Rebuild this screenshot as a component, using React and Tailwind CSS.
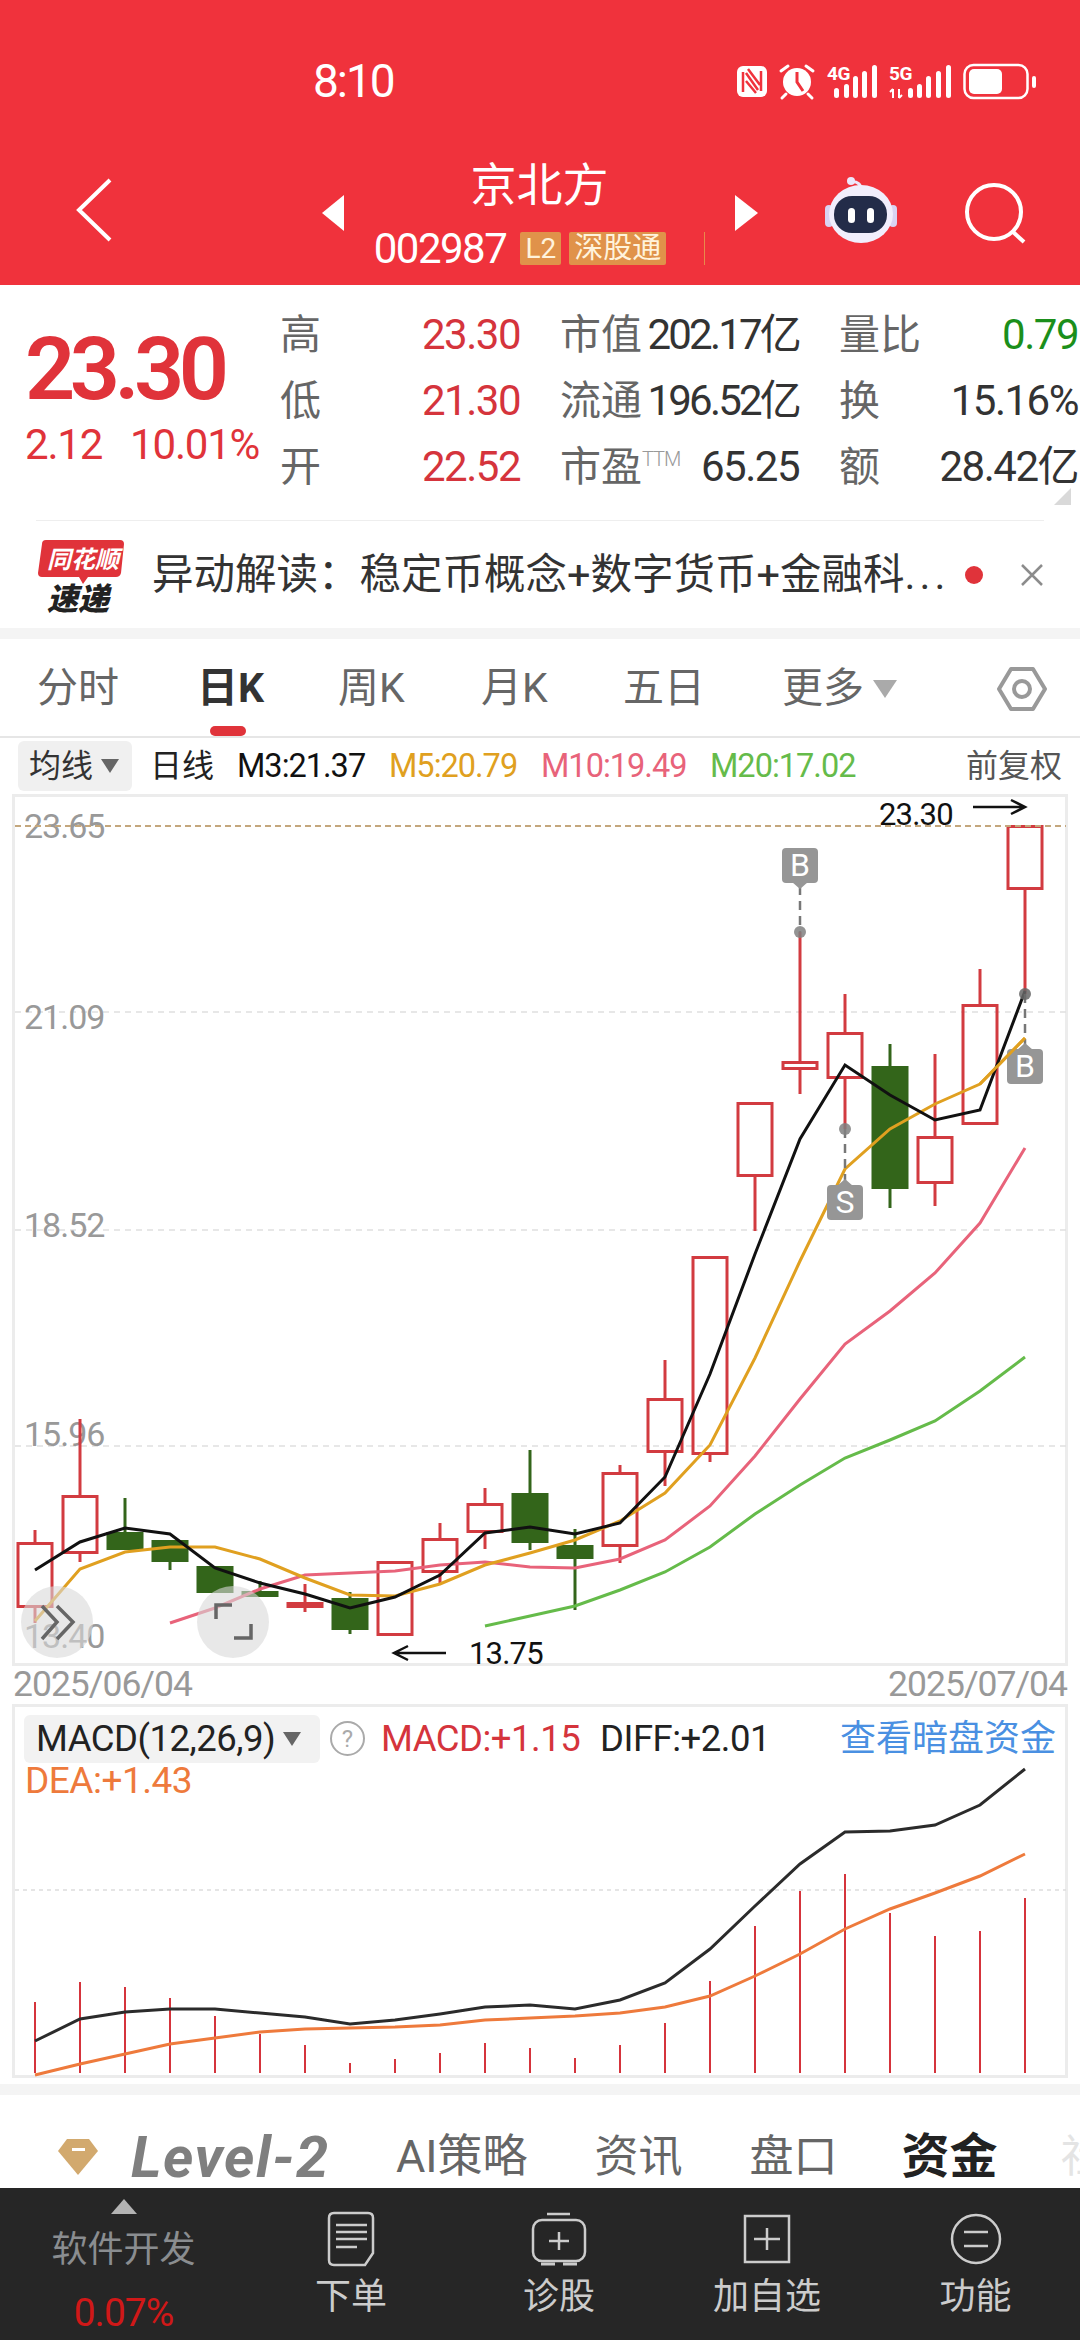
import React from 'react';

const xAt = (i) => 35 + 45 * i;
const toPoints = (ys, start = 0) => ys.map((y, i) => `${xAt(i + start)},${y}`).join(' ');

// open-close body top/bottom plus wick top/bottom, in page pixels
const candles = [
    { up: true, top: 1541, bottom: 1607, high: 1529, low: 1622 },
    { up: true, top: 1494, bottom: 1553, high: 1418, low: 1561 },
    { up: false, top: 1531, bottom: 1549, high: 1497, low: 1549 },
    { up: false, top: 1539, bottom: 1561, high: 1539, low: 1569 },
    { up: false, top: 1565, bottom: 1592, high: 1565, low: 1592 },
    { up: false, top: 1590, bottom: 1596, high: 1580, low: 1596 },
    { up: true, top: 1601, bottom: 1607, high: 1583, low: 1611 },
    { up: false, top: 1597, bottom: 1629, high: 1591, low: 1633 },
    { up: true, top: 1560, bottom: 1635, high: 1560, low: 1635 },
    { up: true, top: 1537, bottom: 1572, high: 1522, low: 1582 },
    { up: true, top: 1502, bottom: 1532, high: 1487, low: 1548 },
    { up: false, top: 1492, bottom: 1542, high: 1449, low: 1549 },
    { up: false, top: 1544, bottom: 1558, high: 1528, low: 1609 },
    { up: true, top: 1471, bottom: 1546, high: 1464, low: 1562 },
    { up: true, top: 1397, bottom: 1452, high: 1359, low: 1485 },
    { up: true, top: 1255, bottom: 1454, high: 1255, low: 1461 },
    { up: true, top: 1101, bottom: 1176, high: 1101, low: 1230 },
    { up: true, top: 1060, bottom: 1069, high: 931, low: 1093 },
    { up: true, top: 1031, bottom: 1078, high: 993, low: 1128 },
    { up: false, top: 1065, bottom: 1188, high: 1043, low: 1207 },
    { up: true, top: 1135, bottom: 1183, high: 1053, low: 1205 },
    { up: true, top: 1003, bottom: 1124, high: 968, low: 1124 },
    { up: true, top: 824, bottom: 889, high: 824, low: 993 },
];

const m3 = [1569, 1541, 1527, 1533, 1567, 1582, 1593, 1607, 1596, 1574, 1532, 1526, 1533, 1522, 1476, 1373, 1253, 1138, 1064, 1094, 1119, 1109, 990];
const m5 = [1620, 1568, 1551, 1546, 1546, 1558, 1577, 1594, 1595, 1583, 1564, 1552, 1539, 1520, 1492, 1444, 1357, 1260, 1168, 1128, 1103, 1083, 1037];
const m10 = [1622, 1607, 1588, 1574, 1572, 1570, 1564, 1561, 1566, 1567, 1558, 1539, 1505, 1455, 1398, 1343, 1310, 1272, 1222, 1147];
const m20 = [1625, 1615, 1605, 1589, 1571, 1546, 1513, 1484, 1457, 1439, 1420, 1390, 1356];

const macdBars = [2001, 1981, 1986, 1997, 2015, 2033, 2044, 2062, 2058, 2052, 2042, 2047, 2057, 2044, 2022, 1980, 1925, 1890, 1873, 1912, 1935, 1930, 1897];
const diffLine = [2040, 2018, 2011, 2008, 2008, 2012, 2016, 2023, 2019, 2013, 2006, 2004, 2008, 1999, 1982, 1948, 1905, 1863, 1831, 1830, 1824, 1804, 1768];
const deaLine = [2074, 2063, 2053, 2043, 2037, 2031, 2028, 2027, 2026, 2024, 2019, 2017, 2015, 2012, 2006, 1995, 1975, 1953, 1928, 1908, 1892, 1875, 1853];

const RED = '#d23b40';
const GREEN = '#33651a';

const StatusIcons = () => (
    <svg width="300" height="40" viewBox="737 60 300 40" fill="white">
        {/* NFC */}
        <rect x="737" y="65" width="30" height="31" rx="6" />
        <path d="M743 91V71M761 70V90M746 72L758 89M746 80L756 92M748 68L760 84" stroke="#f0323c" strokeWidth="2.5" fill="none" />
        {/* alarm */}
        <circle cx="797" cy="81" r="14" />
        <path d="M797 71V81L803 90" stroke="#f0323c" strokeWidth="3" fill="none" />
        <path d="M781 70L788 65M806 65L813 70M786 93L782 97M808 93L812 97" stroke="white" strokeWidth="3" strokeLinecap="round" />
        {/* 4G */}
        <text x="827" y="79" fontSize="19" fontWeight="700" letterSpacing="-0.5">4G</text>
        <rect x="834" y="87" width="5" height="10" rx="2.5" />
        <rect x="844" y="83" width="5" height="14" rx="2.5" />
        <rect x="853" y="75" width="5" height="22" rx="2.5" />
        <rect x="862" y="70" width="5" height="27" rx="2.5" />
        <rect x="872" y="64" width="5" height="33" rx="2.5" />
        {/* 5G */}
        <text x="889" y="79" fontSize="19" fontWeight="700" letterSpacing="-0.5">5G</text>
        <path d="M893 97V88M890 91L893 88M899 88V97M902 94L899 97" stroke="white" strokeWidth="2" fill="none" />
        <rect x="908" y="87" width="5" height="10" rx="2.5" />
        <rect x="917" y="83" width="5" height="14" rx="2.5" />
        <rect x="926" y="75" width="5" height="22" rx="2.5" />
        <rect x="936" y="70" width="5" height="27" rx="2.5" />
        <rect x="946" y="64" width="5" height="33" rx="2.5" />
        {/* battery */}
        <rect x="964.5" y="64" width="63" height="33" rx="9" fill="none" stroke="white" strokeWidth="2.5" />
        <rect x="969" y="68" width="33" height="25" rx="5" />
        <rect x="1032" y="75" width="4" height="12" rx="2" />
    </svg>
);

const RobotIcon = () => (
    <svg width="72" height="66" viewBox="825 177 72 66">
        <path d="M851 182C857 181 861 184 862 191" fill="none" stroke="#ece7fb" strokeWidth="3" />
        <circle cx="851" cy="181" r="4" fill="#ece7fb" />
        <rect x="825" y="205" width="8" height="22" rx="4" fill="#d9d3f2" />
        <rect x="889" y="205" width="8" height="22" rx="4" fill="#d9d3f2" />
        <ellipse cx="861" cy="214" rx="32" ry="29" fill="#f1eefc" />
        <rect x="834" y="196" width="53" height="37" rx="18" fill="#232c49" />
        <rect x="848" y="208" width="7" height="15" rx="3.5" fill="white" />
        <rect x="867" y="208" width="7" height="15" rx="3.5" fill="white" />
    </svg>
);

const TopBar = () => (
    <header className="h-[285px] shrink-0 bg-[#f0323c] text-white">
        <div className="mt-[61px] flex h-[40px] items-center pl-[313px]">
            <span className="w-[81px] whitespace-nowrap text-[46px] leading-none tracking-[-2px]">8:10</span>
            <div className="ml-[343px]">
                <StatusIcons />
            </div>
        </div>
        <div className="mt-[59px] flex items-start pl-[76px]">
            <svg className="mt-[18px]" width="36" height="64" viewBox="0 0 36 64" fill="none" stroke="white" strokeWidth="4">
                <path d="M34 2L3 32L34 62" />
            </svg>
            <svg className="ml-[210px] mt-[35px]" width="22" height="36" viewBox="0 0 22 36" fill="white">
                <path d="M22 0V36L0 18Z" />
            </svg>
            <div className="flex w-[391px] flex-col items-center">
                <div className="text-[46px] leading-[50px]">京北方</div>
                <div className="mt-[22px] flex h-[33px] items-center gap-[8px]">
                    <span className="mr-[6px] text-[42px] leading-none tracking-[-1.5px]">002987</span>
                    <span className="flex h-[33px] w-[41px] items-center justify-center rounded-[2px] bg-[#e0924a] text-[28px] leading-none text-[#fff3dc]">L2</span>
                    <span className="flex h-[33px] w-[97px] items-center justify-center rounded-[2px] bg-[#e0924a] text-[29px] leading-none text-[#fff3dc]">深股通</span>
                    <span className="ml-[30px] h-[33px] w-[1px] bg-[#e88a4a]"></span>
                </div>
            </div>
            <svg className="mt-[35px]" width="23" height="36" viewBox="0 0 23 36" fill="white">
                <path d="M0 0V36L23 18Z" />
            </svg>
            <div className="ml-[67px] mt-[17px]">
                <RobotIcon />
            </div>
            <svg className="ml-[63px] mt-[20px]" width="66" height="64" viewBox="960 180 66 64" fill="none" stroke="white" strokeWidth="4">
                <circle cx="994" cy="212" r="27" />
                <path d="M1012 231L1024 242" />
            </svg>
        </div>
    </header>
);

const StatPair = ({ label, value, valueClass, width, sup }) => (
    <div className="flex items-center justify-between" style={{ width }}>
        <span className="flex items-center text-[41px] leading-none text-[#666]">
            {label}
            {sup && <span className="mb-[16px] text-[20px] font-light leading-none tracking-[-1px] text-[#999]">{sup}</span>}
        </span>
        <span className={`leading-none ${valueClass}`}>{value}</span>
    </div>
);

const NUM = 'text-[42px] tracking-[-1.5px]';
const NUM_YI = 'text-[42px] tracking-[-2.8px]';

const statRows = [
    [
        { label: '高', value: '23.30', cls: `${NUM} text-[#d5343c]` },
        { label: '市值', value: '202.17亿', cls: `${NUM_YI} text-[#333]` },
        { label: '量比', value: '0.79', cls: `${NUM} text-[#1b8f1b]` },
    ],
    [
        { label: '低', value: '21.30', cls: `${NUM} text-[#d5343c]` },
        { label: '流通', value: '196.52亿', cls: `${NUM_YI} text-[#333]` },
        { label: '换', value: '15.16%', cls: `${NUM} text-[#333]` },
    ],
    [
        { label: '开', value: '22.52', cls: `${NUM} text-[#d5343c]` },
        { label: '市盈', value: '65.25', cls: `${NUM} text-[#333]`, sup: 'TTM' },
        { label: '额', value: '28.42亿', cls: `${NUM} text-[#333]` },
    ],
];

const QuotePanel = () => (
    <section className="relative flex h-[235px] shrink-0 bg-white">
        <div className="w-[280px] shrink-0 pl-[25px] pt-[51px] text-[#e0333a]">
            <div className="text-[88px] font-semibold leading-[66px] tracking-[-5.5px]">23.30</div>
            <div className="mt-[22px] flex text-[42px] leading-none tracking-[-1.2px]">
                <span>2.12</span>
                <span className="ml-[28px]">10.01%</span>
            </div>
        </div>
        <div className="pt-[17px]">
            {statRows.map((row, i) => (
                <div key={i} className="flex h-[66px] items-center">
                    <StatPair label={row[0].label} value={row[0].value} valueClass={row[0].cls} width={240} />
                    <div className="ml-[40px]">
                        <StatPair label={row[1].label} value={row[1].value} valueClass={row[1].cls} sup={row[1].sup} width={239} />
                    </div>
                    <div className="ml-[40px]">
                        <StatPair label={row[2].label} value={row[2].value} valueClass={row[2].cls} width={239} />
                    </div>
                </div>
            ))}
        </div>
        <svg className="absolute right-[9px] bottom-[15px]" width="17" height="17" viewBox="0 0 17 17" fill="#d9d9d9">
            <path d="M0 17H17V0Z" />
        </svg>
    </section>
);

const NewsRow = () => (
    <section className="h-[108px] shrink-0 bg-white px-[36px]">
        <div className="h-[1px] bg-[#eee]"></div>
        <div className="flex h-[107px] items-center">
            <svg className="ml-[2px] shrink-0 overflow-visible" width="86" height="72" viewBox="38 537 86 72">
                <path d="M46 538H120Q124 538 124 542L121 571Q120 575 116 575H88L83 582L79 575H42Q38 575 38 571L42 542Q42 538 46 538Z" fill="#e0333a" />
                <text x="47" y="566" fontSize="24" fontWeight="700" fontStyle="italic" fill="white">同花顺</text>
                <text x="47" y="608" fontSize="31" fontWeight="900" fontStyle="italic" fill="#222">速递</text>
            </svg>
            <div className="ml-[28px] w-[810px] whitespace-nowrap text-[41.5px] leading-none text-[#333]">
                异动解读：稳定币概念+数字货币+金融科<span className="tracking-[4px]">...</span>
            </div>
            <span className="ml-[6px] size-[18px] shrink-0 rounded-full bg-[#e0333a]"></span>
            <svg className="ml-[37px] shrink-0" width="24" height="24" viewBox="0 0 24 24" stroke="#8c8c8c" strokeWidth="2.5">
                <path d="M2 2L22 22M22 2L2 22" />
            </svg>
        </div>
    </section>
);

const PeriodTabs = () => (
    <nav className="relative grid h-[99px] shrink-0 grid-cols-[160px_141px_143px_142px_159px_215px_auto] items-center border-b-[2px] border-[#e6e6e6] bg-white pl-[37px] pt-[3px] text-[41px] text-[#666]">
        <span>分时</span>
        <span className="relative font-bold text-[#333]">
            日K
            <span className="absolute left-[13px] top-[68px] h-[10px] w-[36px] rounded-full bg-[#e0333a]"></span>
        </span>
        <span>周K</span>
        <span>月K</span>
        <span>五日</span>
        <span className="flex items-center">
            更多
            <svg className="ml-[9px]" width="24" height="18" viewBox="0 0 24 18" fill="#aaa">
                <path d="M0 0H24L12 18Z" />
            </svg>
        </span>
        <svg width="50" height="46" viewBox="0 0 50 46" fill="none" stroke="#999" strokeWidth="4">
            <path d="M14 3H36L48 23L36 43H14L2 23Z" strokeLinejoin="round" />
            <circle cx="25" cy="23" r="8" />
        </svg>
    </nav>
);

const IndicatorBar = () => (
    <div className="flex h-[56px] shrink-0 items-center bg-white pl-[18px] text-[32px] leading-none">
        <div className="flex h-[50px] w-[114px] items-center rounded-[6px] bg-[#f0f0f0] pl-[11px] text-[#333]">
            均线
            <svg className="ml-[8px]" width="18" height="14" viewBox="0 0 18 14" fill="#666">
                <path d="M0 0H18L9 14Z" />
            </svg>
        </div>
        <span className="ml-[18px] w-[87px] text-[#222]">日线</span>
        <span className="w-[152px] text-[32.5px] tracking-[-1px] text-[#111]">M3:21.37</span>
        <span className="w-[152px] text-[32.5px] tracking-[-1px] text-[#e0a020]">M5:20.79</span>
        <span className="w-[169px] text-[32.5px] tracking-[-1px] text-[#e8637a]">M10:19.49</span>
        <span className="text-[32.5px] tracking-[-1px] text-[#65bb4a]">M20:17.02</span>
        <span className="ml-auto mr-[18px] text-[#555]">前复权</span>
    </div>
);

const Candle = ({ c, i }) => {
    const x = xAt(i);
    const color = c.up ? RED : GREEN;
    return (
        <g>
            {c.high < c.top && <line x1={x} x2={x} y1={c.high} y2={c.top} stroke={color} strokeWidth="3" />}
            {c.low > c.bottom && <line x1={x} x2={x} y1={c.bottom} y2={c.low} stroke={color} strokeWidth="3" />}
            {c.up ? (
                <rect x={x - 17} y={c.top + 1.5} width="34" height={c.bottom - c.top - 3} fill="none" stroke={color} strokeWidth="3" />
            ) : (
                <rect x={x - 18.5} y={c.top} width="37" height={c.bottom - c.top} fill={color} />
            )}
        </g>
    );
};

const Marker = ({ x, y, letter }) => (
    <g>
        <rect x={x - 18} y={y} width="36" height="35" rx="4" fill="#969696" />
        <text x={x} y={y + 28} textAnchor="middle" fontSize="32" fill="white">{letter}</text>
    </g>
);

const KLineChart = () => (
    <div className="h-[872px] shrink-0 bg-white">
        <svg className="overflow-visible" width="1080" height="872" viewBox="0 793 1080 872">
            <rect x="13.5" y="794.5" width="1053" height="869" fill="none" stroke="#ececec" strokeWidth="3" />
            {[1011, 1229, 1445].map((y) => (
                <line key={y} x1="15" x2="1066" y1={y} y2={y} stroke="#e0e0e0" strokeWidth="1.5" strokeDasharray="6 5" />
            ))}
            <g fontSize="34" fill="#999" letterSpacing="-1">
                <text x="24" y="837">23.65</text>
                <text x="24" y="1028">21.09</text>
                <text x="24" y="1236">18.52</text>
                <text x="24" y="1445">15.96</text>
                <text x="24" y="1647">13.40</text>
            </g>
            {candles.map((c, i) => (
                <Candle key={i} c={c} i={i} />
            ))}
            <line x1="15" x2="1066" y1="825" y2="825" stroke="#c4a77d" strokeWidth="2" strokeDasharray="6 4" />
            <polyline points={toPoints(m20, 10)} fill="none" stroke="#65bb4a" strokeWidth="3" />
            <polyline points={toPoints(m10, 3)} fill="none" stroke="#e8637a" strokeWidth="3" />
            <polyline points={toPoints(m5)} fill="none" stroke="#e0a020" strokeWidth="3" />
            <polyline points={toPoints(m3)} fill="none" stroke="#111" strokeWidth="3" />

            {/* buy and sell markers */}
            <line x1="800" x2="800" y1="885" y2="931" stroke="#777" strokeWidth="2.5" strokeDasharray="9 6" />
            <Marker x={800} y={847} letter="B" />
            <path d="M792 881H808L800 888Z" fill="#969696" />
            <circle cx="800" cy="931" r="6" fill="#808080" opacity="0.85" />
            <line x1="845" x2="845" y1="1128" y2="1186" stroke="#777" strokeWidth="2.5" strokeDasharray="9 6" />
            <path d="M837 1185H853L845 1178Z" fill="#969696" />
            <Marker x={845} y={1184} letter="S" />
            <circle cx="845" cy="1128" r="6" fill="#808080" opacity="0.85" />
            <line x1="1025" x2="1025" y1="993" y2="1050" stroke="#777" strokeWidth="2.5" strokeDasharray="9 6" />
            <path d="M1017 1049H1033L1025 1042Z" fill="#969696" />
            <Marker x={1025} y={1048} letter="B" />
            <circle cx="1025" cy="993" r="6" fill="#666" opacity="0.85" />
            <polyline points={`${xAt(21)},1083 ${xAt(22)},1037`} fill="none" stroke="#e0a020" strokeWidth="3" />

            {/* high and low labels */}
            <text x="879" y="824" fontSize="31" fill="#111" letterSpacing="-0.8">23.30</text>
            <path d="M973 806H1025M1011 799L1025 806L1011 813" fill="none" stroke="#111" strokeWidth="2.5" />
            <text x="469" y="1663" fontSize="31" fill="#111" letterSpacing="-0.8">13.75</text>
            <path d="M446 1652H394M408 1645L394 1652L408 1659" fill="none" stroke="#111" strokeWidth="2.5" />

            {/* floating round buttons */}
            <circle cx="57" cy="1621" r="36" fill="#d9d9d9" opacity="0.6" />
            <path d="M42 1605L57 1621L42 1638M57 1605L73 1621L57 1638" fill="none" stroke="#666" strokeWidth="3.5" />
            <circle cx="233" cy="1621" r="36" fill="#d9d9d9" opacity="0.6" />
            <path d="M232 1604H216V1618M251 1623V1637H234" fill="none" stroke="#666" strokeWidth="3.5" />
        </svg>
    </div>
);

const DateRow = () => (
    <div className="flex h-[38px] shrink-0 items-center justify-between bg-white px-[13px] text-[35.5px] leading-none tracking-[-1px] text-[#999]">
        <span>2025/06/04</span>
        <span>2025/07/04</span>
    </div>
);

const MacdPanel = () => (
    <section className="relative h-[380px] shrink-0 bg-white">
        <svg width="1080" height="380" viewBox="0 1703 1080 380">
            <rect x="13.5" y="1704.5" width="1053" height="371" fill="none" stroke="#ececec" strokeWidth="3" />
            <line x1="15" x2="1066" y1="1889" y2="1889" stroke="#ddd" strokeWidth="1.5" strokeDasharray="4 4" />
            {macdBars.map((top, i) => (
                <line key={i} x1={xAt(i)} x2={xAt(i)} y1={top} y2="2072" stroke="#d5343c" strokeWidth="2" />
            ))}
            <polyline points={toPoints(diffLine)} fill="none" stroke="#2b2b2b" strokeWidth="3" />
            <polyline points={toPoints(deaLine)} fill="none" stroke="#ee7a3c" strokeWidth="3" />
        </svg>
        {/* legend sits over the chart */}
        <div className="absolute left-[24px] top-[11px] flex h-[48px] w-[296px] items-center rounded-[6px] bg-[#f2f2f2] pl-[12px] text-[36.5px] leading-none tracking-[-0.5px] text-[#222]">
            MACD(12,26,9)
            <svg className="ml-[8px]" width="18" height="14" viewBox="0 0 18 14" fill="#666">
                <path d="M0 0H18L9 14Z" />
            </svg>
        </div>
        <span className="absolute left-[330px] top-[17px] flex size-[35px] items-center justify-center rounded-full border-[2px] border-[#aaa] text-[24px] leading-none text-[#aaa]">?</span>
        <span className="absolute left-[381px] top-[17px] text-[36.5px] leading-none tracking-[-0.5px] text-[#d5343c]">MACD:+1.15</span>
        <span className="absolute left-[600px] top-[17px] text-[36.5px] leading-none tracking-[-0.5px] text-[#222]">DIFF:+2.01</span>
        <span className="absolute left-[840px] top-[17px] text-[36px] leading-none text-[#4a90e2]">查看暗盘资金</span>
        <span className="absolute left-[25px] top-[58px] text-[37px] leading-none tracking-[-0.5px] text-[#ee7a3c]">DEA:+1.43</span>
    </section>
);

const Divider = () => <div className="h-[11px] shrink-0 bg-[#f4f4f4]"></div>;

const BottomTabs = () => (
    <div className="flex h-[93px] shrink-0 items-center overflow-hidden whitespace-nowrap bg-white pl-[58px] pt-[30px] text-[44px] leading-none text-[#666]">
        <svg className="shrink-0" width="40" height="36" viewBox="0 0 40 36">
            <path d="M9 0H31L40 12L20 36L0 12Z" fill="#d2a96e" strokeLinejoin="round" />
            <rect x="14" y="9" width="13" height="3" fill="white" />
        </svg>
        <span className="ml-[33px] w-[204px] shrink-0 text-[58px] font-bold italic tracking-[1.5px] text-[#7f7f7f]">Level-2</span>
        <span className="ml-[61px] shrink-0 text-[45px]">AI策略</span>
        <span className="ml-[67px] shrink-0">资讯</span>
        <span className="ml-[67px] shrink-0">盘口</span>
        <span className="ml-[64px] shrink-0 text-[48px] font-bold text-[#222]">资金</span>
        <span className="ml-[63px] shrink-0 text-[#e4e4e4]">社区</span>
    </div>
);

const ActionItem = ({ label, children }) => (
    <div className="flex flex-col items-center pt-[23px] text-[36px] leading-none text-[#ccc]">
        <div className="flex h-[56px] items-center">{children}</div>
        <span className="mt-[12px]">{label}</span>
    </div>
);

const BottomBar = () => (
    <footer className="grid h-[153px] shrink-0 grid-cols-[247px_208px_208px_208px_209px] bg-[#262626]">
        <div className="flex flex-col items-center pt-[11px]">
            <svg width="26" height="15" viewBox="0 0 26 15" fill="#b3b3b3">
                <path d="M13 0L26 15H0Z" />
            </svg>
            <span className="mt-[18px] text-[36px] leading-none text-[#8a8d90]">软件开发</span>
            <span className="mt-[26px] text-[39px] leading-none tracking-[-1px] text-[#d01818]">0.07%</span>
        </div>
        <ActionItem label="下单">
            <svg width="48" height="56" viewBox="0 0 48 56" fill="none" stroke="#ccc" strokeWidth="2.5">
                <path d="M7 2H41Q46 2 46 7V42L38 54H7Q2 54 2 49V7Q2 2 7 2Z" />
                <path d="M9 14H40M9 21H40M9 28H40M9 36H30" />
            </svg>
        </ActionItem>
        <ActionItem label="诊股">
            <svg width="56" height="54" viewBox="0 0 56 54" fill="none" stroke="#ccc" strokeWidth="2.5">
                <path d="M16 2H39" />
                <rect x="2" y="8" width="52" height="41" rx="9" />
                <path d="M18 29H38M28 20V38" />
                <path d="M10 52H24M32 52H46" strokeWidth="3" />
            </svg>
        </ActionItem>
        <ActionItem label="加自选">
            <svg width="48" height="50" viewBox="0 0 48 50" fill="none" stroke="#ccc" strokeWidth="2.5">
                <rect x="2" y="2" width="44" height="46" />
                <path d="M11 25H37M24 14V36" />
            </svg>
        </ActionItem>
        <ActionItem label="功能">
            <svg width="52" height="52" viewBox="0 0 52 52" fill="none" stroke="#ccc" strokeWidth="2.5">
                <circle cx="26" cy="26" r="24" />
                <path d="M14 19H38M14 33H38" />
            </svg>
        </ActionItem>
    </footer>
);

export default function App() {
    return (
        <div className="flex h-[2340px] w-[1080px] flex-col overflow-hidden bg-white font-['Roboto','Noto_Sans_CJK_SC',sans-serif]">
            <TopBar />
            <QuotePanel />
            <NewsRow />
            <Divider />
            <PeriodTabs />
            <IndicatorBar />
            <KLineChart />
            <DateRow />
            <MacdPanel />
            <Divider />
            <BottomTabs />
            <BottomBar />
        </div>
    );
}
